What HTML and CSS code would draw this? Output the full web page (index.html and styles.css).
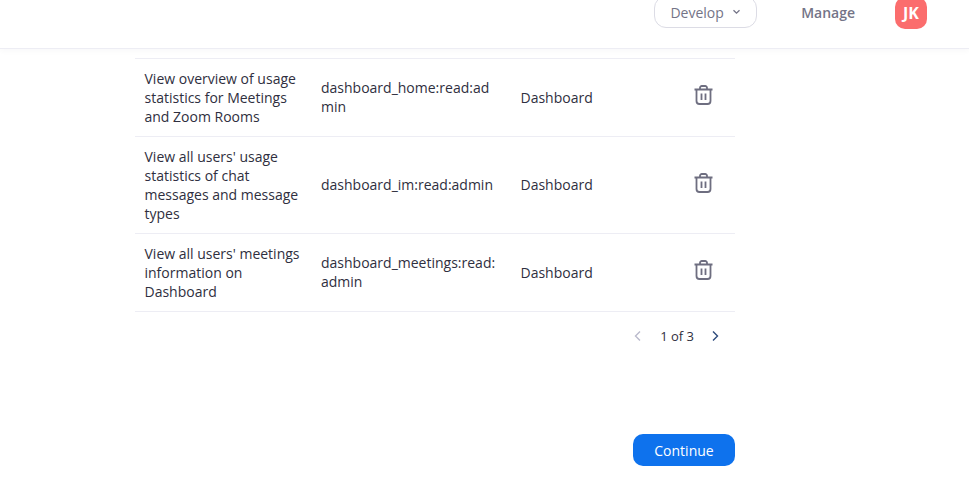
FILE: index.html
```html
<!DOCTYPE html>
<html lang="en">
<head>
    <meta charset="UTF-8">
    <meta name="viewport" content="width=device-width, initial-scale=1.0">
    <title>Scopes</title>
    <link rel="stylesheet" href="styles.css">
</head>
<body>
    <header class="topbar">
        <button type="button" class="develop-btn">Develop
            <svg class="caret" width="9" height="6" viewBox="0 0 9 6"><path d="M1.500 1.200l3 3 3-3" fill="none" stroke="#747487" stroke-width="1.300"/></svg>
        </button>
        <a class="manage-link">Manage</a>
        <div class="avatar">JK</div>
    </header>

    <main class="content">
        <table class="scope-table">
            <colgroup>
                <col class="col-desc">
                <col class="col-scope">
                <col class="col-product">
                <col class="col-action">
            </colgroup>
            <tbody>
                <tr>
                    <td>View overview of usage statistics for Meetings and Zoom Rooms</td>
                    <td class="scope-name">dashboard_home:read:admin</td>
                    <td class="product">Dashboard</td>
                    <td class="action">
                        <svg class="trash" width="19" height="20" viewBox="0 0 19 20"><path d="M0.500 4.500h18M6 4.500V2.800a1.800 1.800 0 0 1 1.800-1.800h3.400a1.800 1.800 0 0 1 1.800 1.800v1.700M2.500 4.500V16a3 3 0 0 0 3 3h8a3 3 0 0 0 3-3V4.500M7.500 8.500v6.500M11.500 8.500v6.500"/></svg>
                    </td>
                </tr>
                <tr>
                    <td>View all users' usage statistics of chat messages and message types</td>
                    <td class="scope-name">dashboard_im:read:admin</td>
                    <td class="product">Dashboard</td>
                    <td class="action">
                        <svg class="trash" width="19" height="20" viewBox="0 0 19 20"><path d="M0.500 4.500h18M6 4.500V2.800a1.800 1.800 0 0 1 1.800-1.800h3.400a1.800 1.800 0 0 1 1.800 1.800v1.700M2.500 4.500V16a3 3 0 0 0 3 3h8a3 3 0 0 0 3-3V4.500M7.500 8.500v6.500M11.500 8.500v6.500"/></svg>
                    </td>
                </tr>
                <tr>
                    <td>View all users' meetings information on Dashboard</td>
                    <td class="scope-name">dashboard_meetings:read:admin</td>
                    <td class="product">Dashboard</td>
                    <td class="action">
                        <svg class="trash" width="19" height="20" viewBox="0 0 19 20"><path d="M0.500 4.500h18M6 4.500V2.800a1.800 1.800 0 0 1 1.800-1.800h3.400a1.800 1.800 0 0 1 1.800 1.800v1.700M2.500 4.500V16a3 3 0 0 0 3 3h8a3 3 0 0 0 3-3V4.500M7.500 8.500v6.500M11.500 8.500v6.500"/></svg>
                    </td>
                </tr>
            </tbody>
        </table>

        <div class="pager">
            <svg class="chevron" width="8" height="12" viewBox="0 0 8 12"><path d="M6 1.500L1.500 6 6 10.500" fill="none" stroke="#babacc" stroke-width="1.400"/></svg>
            <span class="pager-text">1 of 3</span>
            <svg class="chevron" width="8" height="12" viewBox="0 0 8 12"><path d="M2 1.500L6.500 6 2 10.500" fill="none" stroke="#2d4a7c" stroke-width="1.400"/></svg>
        </div>

        <div class="footer-row">
            <button type="button" class="continue-btn">Continue</button>
        </div>
    </main>
</body>
</html>
```
FILE: styles.css
```css
html, body {
    height: 100%;
}

body {
    margin: 0;
    overflow: hidden;
    background: #fff;
    font-family: "Open Sans", sans-serif;
    font-size: 14px;
    line-height: 19px;
    color: #2f2f40;
}

/* Top bar */
.topbar {
    height: 48px;
    border-bottom: 1px solid #ededf4;
    box-shadow: 0 2px 6px rgba(35, 35, 51, 0.03);
    display: flex;
    justify-content: flex-end;
    align-items: flex-end;
    padding-right: 42px;
}

.develop-btn {
    width: 103px;
    height: 32px;
    margin-bottom: 20px;
    border: 1px solid #dcdce5;
    border-radius: 12px;
    background: #fff;
    font: inherit;
    color: #747487;
    display: flex;
    align-items: center;
    justify-content: center;
    gap: 8px;
    padding: 0;
}

.caret {
    margin-top: -1px;
}

.manage-link {
    margin: 0 40px 0 44px;
    padding-bottom: 26px;
    font-weight: 600;
    color: #747487;
}

.avatar {
    width: 32px;
    height: 32px;
    margin-bottom: 19px;
    border-radius: 10px;
    background: #fb6d6d;
    color: #fff;
    font-size: 16px;
    font-weight: 700;
    display: flex;
    align-items: center;
    justify-content: center;
}

/* Scope table */
.content {
    width: 600px;
    margin-left: 135px;
    padding-top: 9px;
}

.scope-table {
    width: 600px;
    table-layout: fixed;
    border-collapse: collapse;
    border-top: 1px solid #ededf4;
}

.col-desc { width: 177px; }
.col-scope { width: 196px; }
.col-product { width: 145px; }
.col-action { width: 82px; }

.scope-table td {
    padding: 10px 9px 10px 9.500px;
    border-bottom: 1px solid #ededf4;
    vertical-align: middle;
}

.scope-table td.scope-name {
    padding: 9.750px 9px 10.250px 9px;
    overflow-wrap: break-word;
}

.scope-table td.product {
    padding: 9.750px 9px 10.250px 12.500px;
}

.scope-table td.action {
    padding: 0 0 5px 19px;
    text-align: center;
    line-height: 0;
}

.trash {
    fill: none;
    stroke: #6e6e80;
    stroke-width: 1.800;
}

/* Pagination */
.pager {
    display: flex;
    justify-content: flex-end;
    align-items: center;
    height: 19px;
    margin-top: 15px;
    padding-right: 16px;
}

.chevron {
    margin-top: -2px;
}

.pager-text {
    font-size: 13px;
    margin: 0 17px 0 18px;
}

/* Footer */
.footer-row {
    display: flex;
    justify-content: flex-end;
    margin-top: 88px;
}

.continue-btn {
    width: 102px;
    height: 32px;
    border: none;
    border-radius: 10px;
    background: #0e72ed;
    color: #fff;
    font: inherit;
}
```
